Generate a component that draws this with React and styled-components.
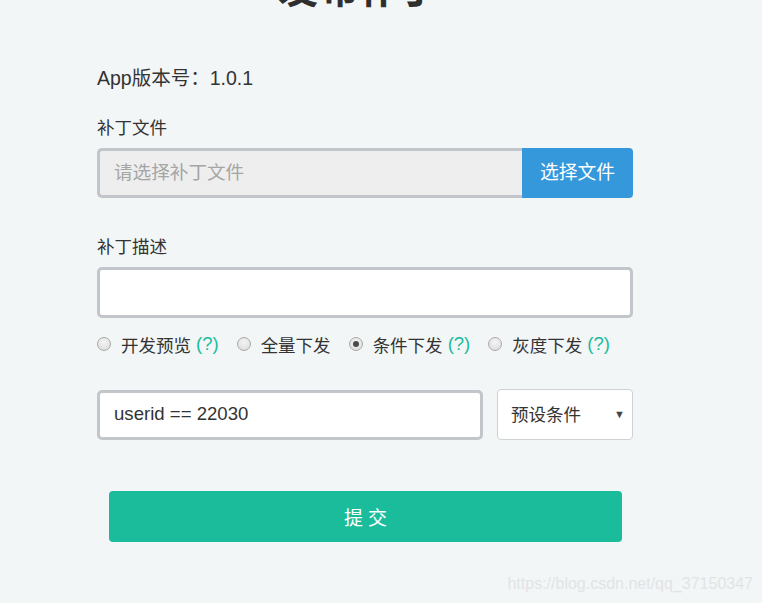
import styled, { createGlobalStyle } from "styled-components";

const Global = createGlobalStyle`
  html, body {
    margin: 0;
    padding: 0;
    background: #f3f6f7;
  }
  body {
    font-family: "Liberation Sans", "Noto Sans CJK SC", sans-serif;
    color: #333;
    overflow: hidden;
  }
`;

const Page = styled.div`
  width: 762px;
  height: 603px;
  position: relative;
  overflow: hidden;
`;

const Form = styled.div`
  width: 536px;
  margin-left: 97px;
  display: flex;
  flex-direction: column;
`;

const Title = styled.h1`
  margin: -31px 0 0 0;
  padding-right: 14px;
  height: 40px;
  line-height: 40px;
  font-size: 40px;
  font-weight: bold;
  color: #2f2f2f;
  text-align: center;
`;

const Version = styled.div`
  margin-top: 57px;
  font-size: 19.5px;
  line-height: 24px;
`;

const Label = styled.div`
  margin-top: ${(p) => p.$top}px;
  font-size: 17.5px;
  line-height: 24px;
  color: #333;
`;

const FileRow = styled.div`
  margin-top: 8px;
  display: flex;
  height: 50px;
`;

const TextBox = styled.div`
  box-sizing: border-box;
  flex: ${(p) => (p.$width ? `0 0 ${p.$width}px` : "1")};
  height: ${(p) => p.$height || 50}px;
  border: 3px solid #c2c6ca;
  border-radius: ${(p) => (p.$attached ? "5px 0 0 5px" : "5px")};
  border-right-width: ${(p) => (p.$attached ? 0 : 3)}px;
  background: ${(p) => (p.$disabled ? "#eeeeee" : "#fff")};
  display: flex;
  align-items: center;
  padding: 0 0 ${(p) => (p.$placeholder ? 5 : 1)}px 14px;
  font-size: 18.6px;
  color: ${(p) => (p.$placeholder ? "#a5a5a5" : "#333")};
`;

const FileButton = styled.div`
  box-sizing: border-box;
  width: 111px;
  height: 50px;
  padding-bottom: 5px;
  background: #3498db;
  color: #fff;
  border-radius: 0 4px 4px 0;
  display: flex;
  align-items: center;
  justify-content: center;
  font-size: 18.8px;
`;

const DescRow = styled.div`
  margin-top: 8px;
  display: flex;
`;

const Radios = styled.div`
  margin-top: 13px;
  display: flex;
  align-items: center;
  height: 26px;
`;

const RadioItem = styled.label`
  display: flex;
  align-items: center;
  margin-right: ${(p) => p.$gap}px;
  font-size: 17.5px;
  color: #333;
`;

const RadioDot = styled.span`
  box-sizing: border-box;
  width: 14px;
  height: 14px;
  border-radius: 50%;
  border: 1px solid #a9a9a9;
  background: radial-gradient(circle at 50% 35%, #f4f4f4 0%, #d9d9d9 100%);
  margin: 0 10px 0 0;
  display: flex;
  align-items: center;
  justify-content: center;

  &::after {
    content: "";
    width: 6px;
    height: 6px;
    border-radius: 50%;
    background: ${(p) => (p.$checked ? "#4a4a4a" : "transparent")};
  }
`;

const Help = styled.span`
  color: #1abc9c;
  margin-left: 5px;
  font-size: 18.5px;
`;

const CondRow = styled.div`
  margin-top: 32px;
  display: flex;
  align-items: center;
  gap: 14px;
`;

const Select = styled.div`
  box-sizing: border-box;
  flex: 1;
  height: 51px;
  border: 1px solid #cfd2d5;
  border-radius: 4px;
  background: #fff;
  display: flex;
  align-items: center;
  justify-content: space-between;
  padding: 0 7px 2px 13px;
  font-size: 17.5px;
  color: #333;
`;

const Caret = styled.span`
  font-size: 11px;
  color: #444;
`;

const Submit = styled.div`
  margin: 51px 11px 0 12px;
  height: 51px;
  background: #1abc9c;
  border-radius: 4px;
  color: #fff;
  font-size: 19px;
  display: flex;
  align-items: center;
  justify-content: center;
  letter-spacing: 5px;
  padding-left: 5px;
`;

const Watermark = styled.div`
  position: absolute;
  right: 9px;
  bottom: 10px;
  font-size: 16px;
  color: #e1e4e6;
`;

export default function App() {
  const options = [
    { text: "开发预览", help: true, gap: 18 },
    { text: "全量下发", help: false, gap: 18 },
    { text: "条件下发", help: true, checked: true, gap: 18 },
    { text: "灰度下发", help: true, gap: 0 },
  ];

  return (
    <Page>
      <Global />
      <Form>
        <Title>发布补丁</Title>
        <Version>App版本号：1.0.1</Version>
        <Label $top={26}>补丁文件</Label>
        <FileRow>
          <TextBox $attached $disabled $placeholder>
            请选择补丁文件
          </TextBox>
          <FileButton>选择文件</FileButton>
        </FileRow>
        <Label $top={37}>补丁描述</Label>
        <DescRow>
          <TextBox $height={51} />
        </DescRow>
        <Radios>
          {options.map((o) => (
            <RadioItem key={o.text} $gap={o.gap}>
              <RadioDot $checked={o.checked} />
              {o.text}
              {o.help && <Help>(?)</Help>}
            </RadioItem>
          ))}
        </Radios>
        <CondRow>
          <TextBox $width={386}>userid == 22030</TextBox>
          <Select>
            预设条件
            <Caret>▼</Caret>
          </Select>
        </CondRow>
        <Submit>提交</Submit>
      </Form>
      <Watermark>https://blog.csdn.net/qq_37150347</Watermark>
    </Page>
  );
}
